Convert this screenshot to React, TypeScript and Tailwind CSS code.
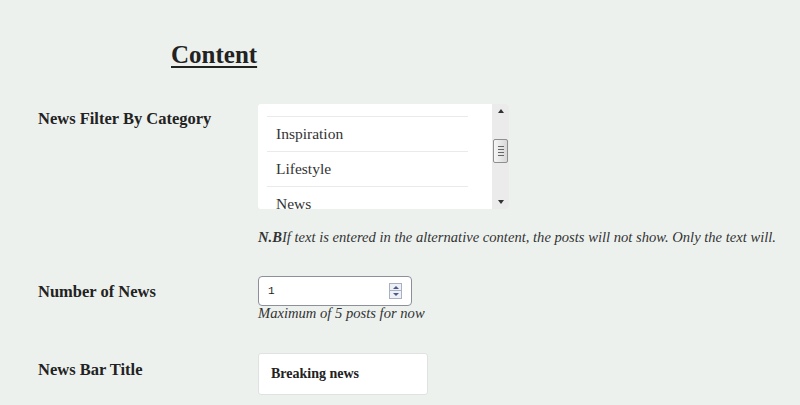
import React from "react";

const serif = { fontFamily: '"Liberation Serif", "DejaVu Serif", serif' };

const categories = ["Inspiration", "Lifestyle", "News"];

const Label = ({ children }: { children: React.ReactNode }) => (
  <div className="w-[220px] shrink-0 text-[16.5px] font-bold text-[#222]">{children}</div>
);

const CategoryList = () => {
  return (
    <div className="flex h-[105px] w-[251px] overflow-hidden rounded-[3px] bg-white">
      <div className="flex-1 overflow-hidden pl-[9px]">
        <ul className="w-[201px]">
          <li className="h-[13px] border-b border-[#e8ebe9]" />
          {categories.map((c) => (
            <li
              key={c}
              className="flex h-[35px] items-center border-b border-[#e8ebe9] pl-[9px] text-[15.5px] text-[#333]"
            >
              {c}
            </li>
          ))}
        </ul>
      </div>
      <div className="flex w-[17px] flex-col items-center bg-[#ebebeb]">
        <div className="mt-[5px] h-0 w-0 border-x-[3px] border-b-[4px] border-x-transparent border-b-[#333]" />
        <div className="mt-[26px] flex h-[24px] w-[15px] flex-col items-center justify-center gap-[2px] rounded-[2px] border border-[#8e8f8f] bg-gradient-to-r from-[#f6f6f6] to-[#d8d8d8]">
          <span className="h-px w-[6px] bg-[#666]" />
          <span className="h-px w-[6px] bg-[#666]" />
          <span className="h-px w-[6px] bg-[#666]" />
          <span className="h-px w-[6px] bg-[#666]" />
        </div>
        <div className="mt-auto mb-[5px] h-0 w-0 border-x-[3px] border-t-[4px] border-x-transparent border-t-[#333]" />
      </div>
    </div>
  );
};

const NumberBox = () => (
  <div className="flex h-[30px] w-[154px] items-center justify-between rounded-[4px] border border-[#8c909a] bg-white pl-[9px] pr-[9px]">
    <span className="text-[11px] text-[#222]" style={{ fontFamily: '"Liberation Mono", monospace' }}>
      1
    </span>
    <div className="flex h-[16px] w-[13px] flex-col border border-[#a9b0c3] bg-[#eef0f6]">
      <div className="flex flex-1 items-center justify-center border-b border-[#a9b0c3]">
        <div className="h-0 w-0 border-x-[3px] border-b-[3px] border-x-transparent border-b-[#4a5a8a]" />
      </div>
      <div className="flex flex-1 items-center justify-center">
        <div className="h-0 w-0 border-x-[3px] border-t-[3px] border-x-transparent border-t-[#4a5a8a]" />
      </div>
    </div>
  </div>
);

export default function App() {
  return (
    <div className="h-[405px] w-[800px] overflow-hidden bg-[#edf1ee]" style={serif}>
      <div className="pl-[171px] pt-[40px]">
        <h2 className="text-[25px] font-bold leading-[30px] text-[#222] underline decoration-[2px] underline-offset-[3px]">
          Content
        </h2>
      </div>

      <div className="mt-[34px] flex pl-[38px]">
        <div className="pt-[3px]">
          <Label>News Filter By Category</Label>
        </div>
        <div>
          <CategoryList />
          <p className="mt-[18px] text-[14.6px] italic text-[#333]">
            <b>N.B</b>If text is entered in the alternative content, the posts will not show. Only the text will.
          </p>
        </div>
      </div>

      <div className="mt-[27px] flex pl-[38px]">
        <div className="pt-[4px]">
          <Label>Number of News</Label>
        </div>
        <div>
          <NumberBox />
          <p className="mt-[-1px] text-[14.6px] leading-[17px] italic text-[#333]">Maximum of 5 posts for now</p>
        </div>
      </div>

      <div className="mt-[31px] flex pl-[38px]">
        <div className="pt-[5px]">
          <Label>News Bar Title</Label>
        </div>
        <div className="flex h-[42px] w-[170px] items-center rounded-[3px] border border-[#dfe2e0] bg-white pl-[12px] text-[14px] font-bold text-[#222]">
          Breaking news
        </div>
      </div>
    </div>
  );
}
